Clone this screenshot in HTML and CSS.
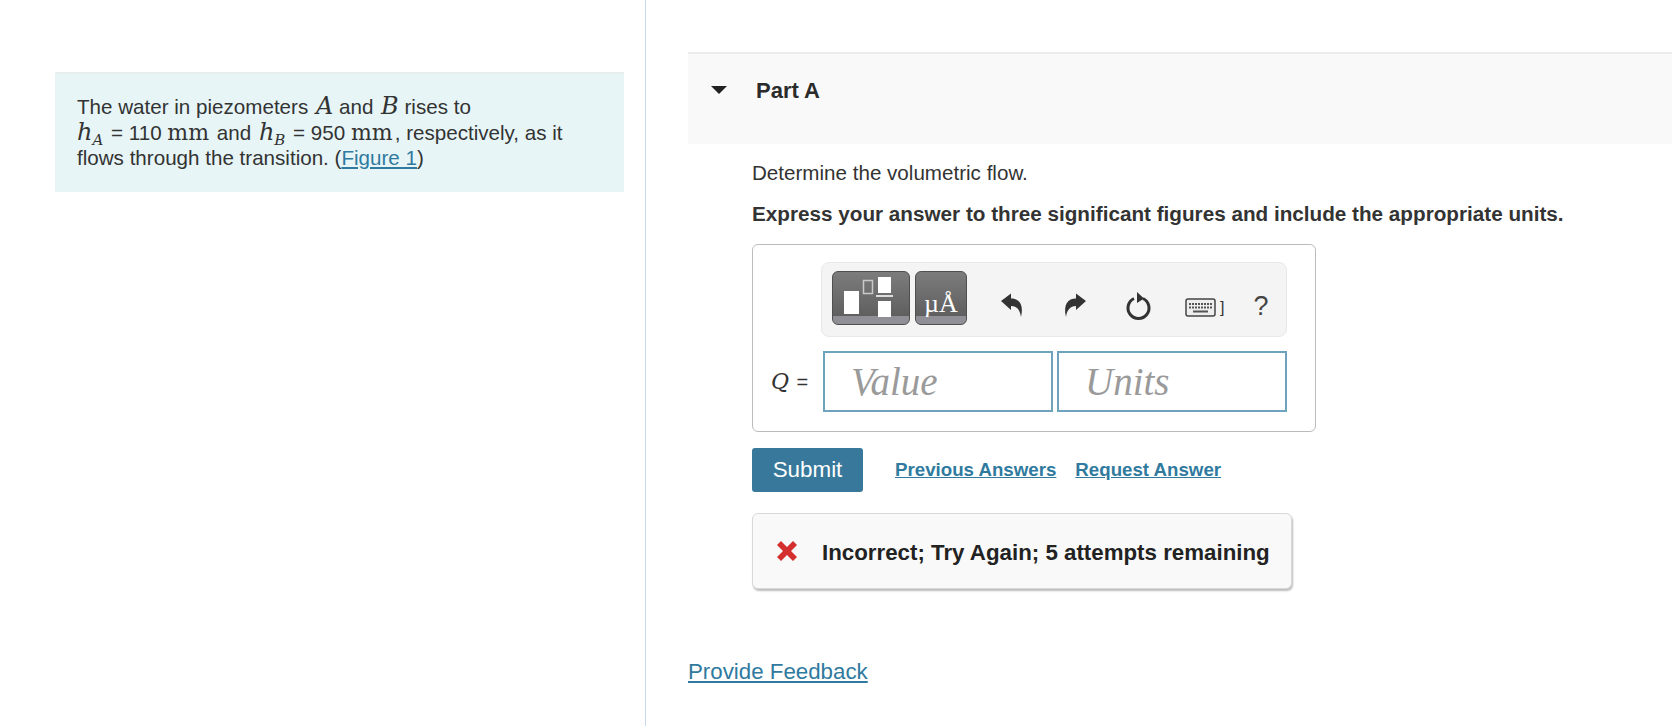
FILE: index.html
```html
<!DOCTYPE html>
<html lang="en">
<head>
    <meta charset="UTF-8">
    <title>Part A</title>
    <link rel="stylesheet" href="styles.css">
</head>
<body>
    <div class="left-col">
        <div class="intro">
            The water in piezometers <span class="math big">A</span> and <span class="math big">B</span> rises to<br>
            <span class="math big">h</span><sub class="math">A</sub> = 110 <span class="mm">mm</span> and <span class="math big">h</span><sub class="math">B</sub> = 950 <span class="mm">mm</span>, respectively, as it<br>
            flows through the transition. (<a href="#">Figure 1</a>)
        </div>
    </div>

    <div class="right-col">
        <div class="part-head">
            <span class="caret"></span>
            <span class="part-title">Part A</span>
        </div>

        <div class="part-body">
            <p class="question">Determine the volumetric flow.</p>
            <p class="instruction">Express your answer to three significant figures and include the appropriate units.</p>

            <div class="answer-box">
                <div class="toolbar">
                    <div class="tool-btn tool-wide">
                        <svg width="76" height="52" viewBox="0 0 76 52">
                            <rect x="11" y="19" width="15" height="23" fill="#fff"/>
                            <rect x="30.500" y="8.500" width="9" height="13" fill="none" stroke="#c9c9c9" stroke-width="1.500"/>
                            <rect x="45" y="5" width="13" height="16" fill="#fff"/>
                            <rect x="43" y="23" width="17" height="2" fill="#ddd"/>
                            <rect x="45" y="29" width="13" height="16" fill="#fff"/>
                        </svg>
                    </div>
                    <div class="tool-btn tool-unit">µÅ</div>

                    <svg class="icon icon-undo" width="24" height="26" viewBox="0 0 24 26">
                        <path d="M1 9 L11 1.500 V6.500 C19 6.500 24 12 21 25 C20 18 17 14 11 14 V18 Z" fill="#333"/>
                    </svg>
                    <svg class="icon icon-redo" width="24" height="26" viewBox="0 0 24 26">
                        <path d="M23 9 L13 1.500 V6.500 C5 6.500 0 12 3 25 C4 18 7 14 13 14 V18 Z" fill="#333"/>
                    </svg>
                    <svg class="icon icon-reset" width="28" height="30" viewBox="0 0 28 30">
                        <path d="M9 7.500 A10.500 10.500 0 1 0 18 7.500" fill="none" stroke="#333" stroke-width="3"/>
                        <path d="M12 1 L19 7.500 L12 12 Z" fill="#333"/>
                    </svg>
                    <svg class="icon icon-keys" width="32" height="20" viewBox="0 0 32 20">
                        <rect x="1" y="1" width="29" height="17" rx="2" fill="#eee" stroke="#444" stroke-width="1.500"/>
                        <path d="M4 6 H27 M4 9.500 H27" stroke="#555" stroke-width="2" stroke-dasharray="2 1"/>
                        <path d="M8 13.500 H23" stroke="#555" stroke-width="2"/>
                    </svg>
                    <span class="bracket">]</span>
                    <span class="help">?</span>
                </div>

                <div class="input-row">
                    <span class="var-label"><i>Q</i> =</span>
                    <div class="field">Value</div>
                    <div class="field">Units</div>
                </div>
            </div>

            <div class="actions">
                <button class="submit" type="button">Submit</button>
                <a class="action-link link-prev" href="#">Previous Answers</a>
                <a class="action-link" href="#">Request Answer</a>
            </div>

            <div class="feedback">
                <svg class="cross" width="22" height="22" viewBox="0 0 22 22">
                    <path d="M1 5 L5 1 L11 7 L17 1 L21 5 L15 11 L21 17 L17 21 L11 15 L5 21 L1 17 L7 11 Z" fill="#d32f2f"/>
                </svg>
                <span class="feedback-text">Incorrect; Try Again; 5 attempts remaining</span>
            </div>
        </div>

        <a class="provide" href="#">Provide Feedback</a>
    </div>
</body>
</html>
```

FILE: styles.css
```css
html, body {
    height: 100%;
}
body {
    font-family: 'Liberation Sans', Arial, sans-serif;
    font-size: 20.600px;
    color: #333;
    background: #fff;
    margin: 0;
    display: flex;
    overflow: hidden;
}
a {
    color: #2f7a9e;
}

/* left column */
.left-col {
    width: 646px;
    flex: none;
    box-sizing: border-box;
    border-right: 1px solid #c9d8ea;
    padding: 72px 21px 0 55px;
}
.intro {
    background: #e7f5f7;
    border-top: 2px solid #e8eded;
    padding: 20px 22px 0;
    line-height: 25.600px;
    height: 120px;
    box-sizing: border-box;
    white-space: nowrap;
}
.math {
    font-family: 'DejaVu Serif', serif;
    font-style: italic;
}
.big {
    font-size: 24px;
    line-height: 20px;
    margin-left: 2px;
}
.intro br + .big {
    margin-left: 0;
}
sub.math {
    font-size: 15px;
    line-height: 0;
    margin-right: 2px;
}
.mm {
    font-family: 'DejaVu Serif', serif;
    font-size: 22px;
    line-height: 20px;
    margin-right: 2px;
}

/* right column */
.right-col {
    flex: 1;
    min-width: 0;
    padding: 52px 0 0 42px;
}
.part-head {
    height: 92px;
    box-sizing: border-box;
    background: #f9f9f9;
    border-top: 2px solid #ececec;
    display: flex;
    align-items: flex-start;
    padding: 26px 0 0 23px;
}
.caret {
    width: 0;
    height: 0;
    border-left: 8px solid transparent;
    border-right: 8px solid transparent;
    border-top: 8px solid #222;
    margin-top: 6px;
}
.part-title {
    font-weight: bold;
    font-size: 22px;
    line-height: 22px;
    color: #2b2b2b;
    margin-left: 29px;
}
.part-body {
    padding-left: 64px;
}
.question {
    margin: 0;
    padding-top: 18px;
    line-height: 22px;
}
.instruction {
    margin: 0;
    padding-top: 19px;
    line-height: 22px;
    font-size: 20.700px;
    font-weight: bold;
}

.answer-box {
    width: 564px;
    height: 188px;
    box-sizing: border-box;
    margin-top: 19px;
    border: 1px solid #bcbcbc;
    border-radius: 6px;
    padding: 17px 0 0 68px;
}
.toolbar {
    width: 466px;
    height: 75px;
    box-sizing: border-box;
    background: #f4f4f4;
    border: 1px solid #e8e8e8;
    border-radius: 8px;
    display: flex;
    align-items: center;
    padding: 0 0 0 10px;
}
.tool-btn {
    height: 54px;
    box-sizing: border-box;
    border: 1px solid #4f4f4f;
    border-radius: 6px;
    background: linear-gradient(#7c7c7c, #5f5f5f 85%, #908f96 85%);
    display: flex;
    justify-content: center;
    color: #fff;
    margin-bottom: 3px;
}
.tool-wide {
    width: 78px;
}
.tool-unit {
    width: 52px;
    margin-left: 5px;
    font-family: 'Liberation Serif', serif;
    font-size: 26px;
    line-height: 63px;
}
.icon {
    margin-top: 10px;
}
.icon-undo {
    margin-left: 33px;
}
.icon-redo {
    margin-left: 39px;
}
.icon-reset {
    margin-left: 38px;
    margin-top: 12px;
}
.icon-keys {
    margin-left: 32px;
    margin-top: 16px;
}
.bracket {
    font-size: 16px;
    margin: 16px 0 0 3px;
}
.help {
    font-size: 27px;
    margin: 13px 0 0 29px;
    color: #444;
}

.input-row {
    display: flex;
    align-items: center;
    margin-top: 14px;
}
.var-label {
    margin-left: -50px;
    width: 52px;
    font-size: 20px;
    white-space: nowrap;
}
.var-label i {
    font-family: 'DejaVu Serif', serif;
    font-size: 22px;
    margin-right: 2px;
}
.field {
    width: 230px;
    height: 61px;
    box-sizing: border-box;
    border: 2px solid #6fa3bd;
    font-family: 'Liberation Serif', serif;
    font-style: italic;
    font-size: 39px;
    line-height: 57px;
    color: #9a9a9a;
    padding-left: 26px;
    margin-right: 4px;
}

.actions {
    display: flex;
    align-items: center;
    margin-top: 16px;
}
.submit {
    width: 111px;
    height: 44px;
    background: #37789b;
    color: #fff;
    border: 0;
    border-radius: 3px;
    font-family: 'Liberation Sans', Arial, sans-serif;
    font-size: 22.400px;
}
.action-link {
    font-weight: bold;
    font-size: 18.700px;
}
.link-prev {
    margin: 0 19px 0 32px;
}

.feedback {
    width: 540px;
    height: 76px;
    box-sizing: border-box;
    margin-top: 21px;
    background: #f9f9f9;
    border: 1px solid #d8d8d8;
    border-radius: 6px;
    box-shadow: 1px 2px 2px #bdbdbd;
    display: flex;
    align-items: center;
    padding-left: 23px;
    font-weight: bold;
    font-size: 22.300px;
    color: #222;
    white-space: nowrap;
}
.cross {
    margin-right: 24px;
}
.feedback-text {
    padding-top: 3px;
}
.provide {
    display: inline-block;
    margin-top: 70px;
    font-size: 22.300px;
}
```
